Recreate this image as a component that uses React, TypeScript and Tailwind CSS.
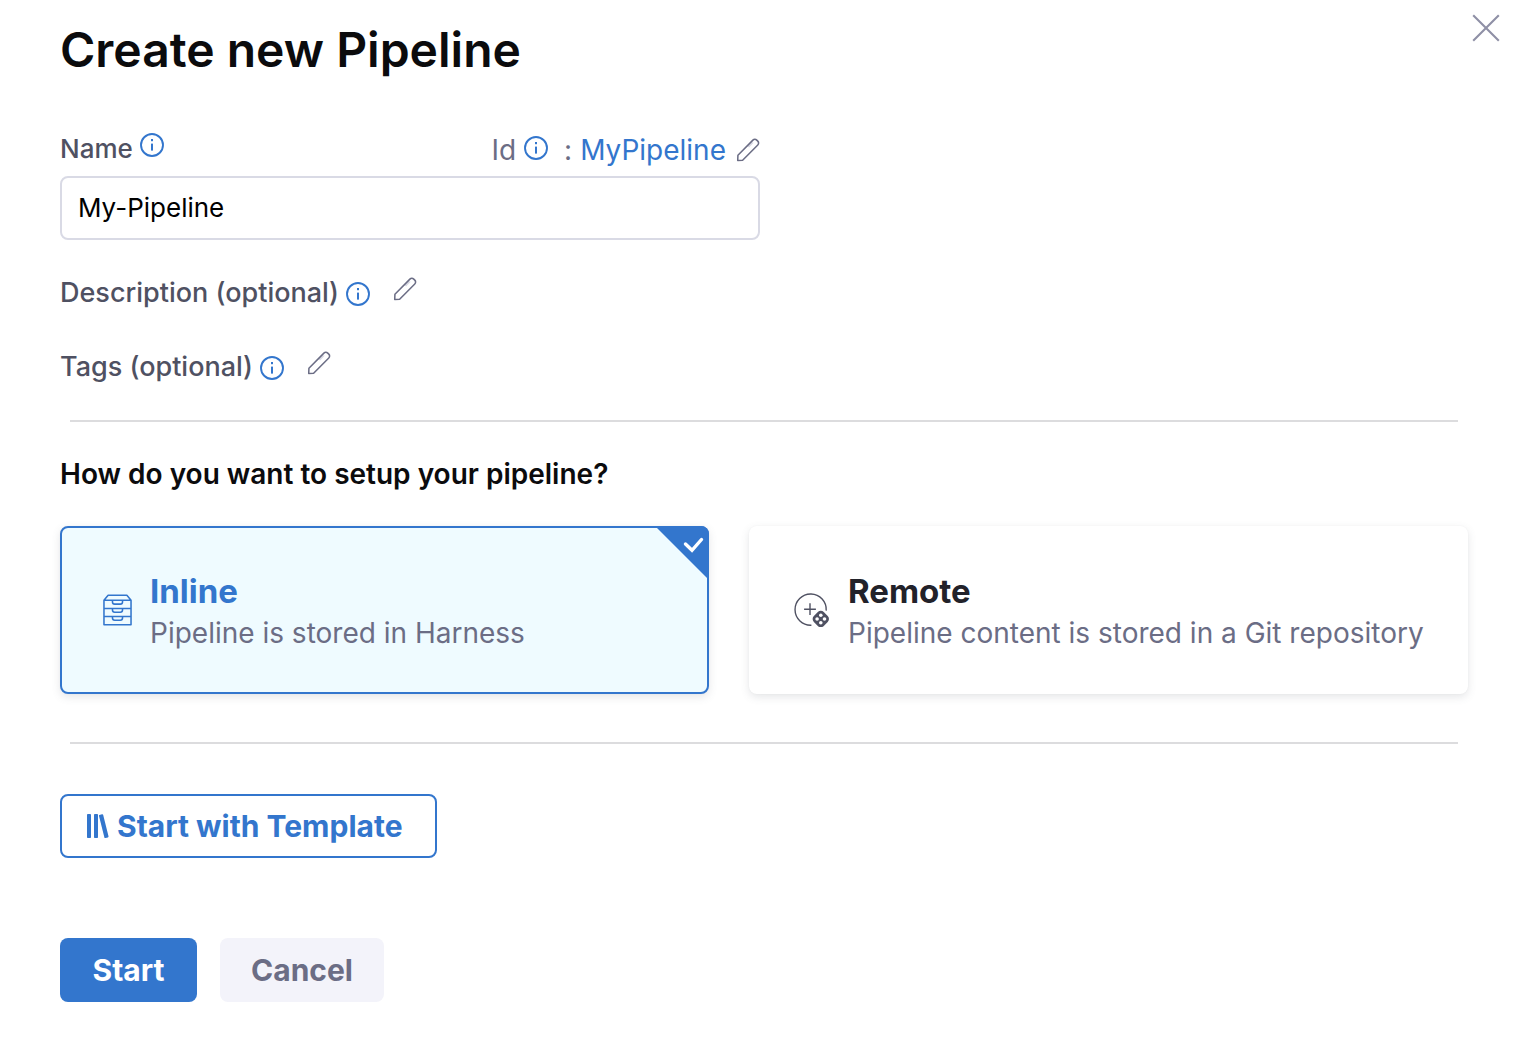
import { useState } from "react";
import type { ReactNode } from "react";

function InfoIcon() {
  return (
    <svg className="size-6 shrink-0 text-[#3376cd]" viewBox="0 0 24 24" fill="none" aria-hidden="true">
      <circle cx="12" cy="12" r="11" stroke="currentColor" strokeWidth="1.9" />
      <rect x="11" y="6" width="2" height="2.2" fill="currentColor" />
      <rect x="11" y="10.6" width="2" height="7" fill="currentColor" />
    </svg>
  );
}

function PencilIcon() {
  return (
    <svg className="size-6 text-[#6b6d85]" viewBox="0 0 25 25" fill="none" aria-hidden="true">
      <path d="M11.6 8.4l4.4-4.3 2.4.8-4.8 4.9z" fill="#d9dae5" />
      <path
        d="M1.8 23.4l.2-5.4L17.6 2.2a2.8 2.8 0 0 1 4 0l1.1 1.1a2.8 2.8 0 0 1 0 4L6.9 23.2z"
        stroke="currentColor"
        strokeWidth="1.6"
        strokeLinejoin="round"
      />
    </svg>
  );
}

function CloseIcon() {
  return (
    <svg className="size-7 text-[#8f90a6]" viewBox="0 0 28 28" fill="none" aria-hidden="true">
      <path d="M1.2 1.2l25.6 25.6M26.8 1.2L1.2 26.8" stroke="currentColor" strokeWidth="2.1" />
    </svg>
  );
}

function CabinetIcon() {
  return (
    <svg className="h-8 w-[29px] shrink-0 text-[#3376cd]" viewBox="0 0 30 32" fill="none" aria-hidden="true">
      <g stroke="currentColor" strokeWidth="1.6" strokeLinejoin="round">
        <path d="M1 6L5.3.8h19.4L29 6v25.2H1zM1 6h28M1 14.4h28M1 22.8h28" />
        <path d="M9.8 6.2v1.4c0 1.5.9 2.3 2.3 2.3h5.8c1.4 0 2.3-.8 2.3-2.3V6.2" />
        <path d="M9.8 14.6V16c0 1.5.9 2.3 2.3 2.3h5.8c1.4 0 2.3-.8 2.3-2.3v-1.4" />
        <path d="M9.8 23v1.2c0 1.5.9 2.3 2.3 2.3h5.8c1.4 0 2.3-.8 2.3-2.3V23" />
      </g>
    </svg>
  );
}

function RemoteIcon() {
  return (
    <svg className="h-[34px] w-9 shrink-0 text-[#4f5162]" viewBox="0 0 36 34" fill="none" aria-hidden="true">
      <path d="M32.2 17.6A15.6 15.6 0 1 0 17.4 32.2" stroke="currentColor" strokeWidth="1.4" />
      <path d="M16 10.3v11.8M10.1 16.2h11.8" stroke="currentColor" strokeWidth="1.4" />
      <rect x="19.8" y="19" width="14" height="14" rx="4.2" transform="rotate(45 26.8 26)" fill="currentColor" />
      <g fill="#fff">
        <circle cx="26.8" cy="22.3" r="1.8" />
        <circle cx="23.1" cy="26" r="1.8" />
        <circle cx="30.5" cy="26" r="1.8" />
        <circle cx="26.8" cy="29.7" r="1.8" />
      </g>
    </svg>
  );
}

function TemplateIcon() {
  return (
    <svg className="h-6 w-[23px] shrink-0" viewBox="0 0 23 24" aria-hidden="true" fill="currentColor">
      <rect x="1" y="0" width="4" height="24" rx="0.8" />
      <rect x="8" y="0" width="4" height="24" rx="0.8" />
      <path d="M13.4 1l2.6-.7c.6-.2 1 0 1.2.6L22.5 22.3c.1.6-.1 1-.6 1.1l-2.4.6c-.6.1-1-.1-1.1-.6L13 2c-.1-.5 0-.8.4-1z" />
    </svg>
  );
}

function CornerCheck() {
  return (
    <svg className="absolute -top-0.5 -right-0.5 size-[54px]" viewBox="0 0 54 54" fill="none" aria-hidden="true">
      <path d="M0 0h46a8 8 0 0 1 8 8v46z" fill="#3376cd" />
      <path d="M30.5 18l6.5 6.3L46.5 13.5" stroke="#fff" strokeWidth="3.4" strokeLinecap="round" />
    </svg>
  );
}

type CardProps = {
  value: string;
  title: string;
  text: string;
  icon: ReactNode;
  selected: boolean;
  onSelect: (value: string) => void;
};

function StoreCard({ value, title, text, icon, selected, onSelect }: CardProps) {
  return (
    <label
      className={
        "relative flex h-[168px] cursor-pointer items-center gap-[18px] rounded-lg border-2 shadow-[0_0_2px_rgba(40,41,61,0.04),0_3px_8px_rgba(96,97,112,0.16)] " +
        (selected ? "border-[#3376cd] bg-[#effbff] pl-[41px]" : "border-transparent bg-white pl-[43px]")
      }
    >
      <input
        type="radio"
        name="store"
        value={value}
        checked={selected}
        onChange={() => onSelect(value)}
        className="sr-only"
      />
      {icon}
      <span className="flex flex-col pt-1">
        <span
          className={
            "text-[33px] leading-[42px] font-bold " + (selected ? "text-[#3376cd]" : "text-[#22222a]")
          }
        >
          {title}
        </span>
        <span className="text-[28px] leading-[42px] text-[#6b6d85]">{text}</span>
      </span>
      {selected && <CornerCheck />}
    </label>
  );
}

function OptionalRow({ label }: { label: string }) {
  return (
    <div className="flex h-9 items-center">
      <span className="text-[27px] font-medium text-[#4f5162]">{label}</span>
      <span className="ml-[7px] pt-0.5">
        <InfoIcon />
      </span>
      <button type="button" aria-label={"Edit " + label} className="mb-2 ml-[23px]">
        <PencilIcon />
      </button>
    </div>
  );
}

export default function App() {
  const [name, setName] = useState("My-Pipeline");
  const [store, setStore] = useState("inline");

  return (
    <div className="min-h-screen bg-white font-['Inter',sans-serif]">
      <form className="relative pt-[22px] pr-[50px] pb-11 pl-[60px]" onSubmit={(e) => e.preventDefault()}>
        <button type="button" aria-label="Close" className="absolute top-3.5 right-[18px]">
          <CloseIcon />
        </button>
        <h1 className="text-[48px] leading-14 font-semibold text-[#0b0b0d]">Create new Pipeline</h1>

        <div className="mt-[52px] max-w-[700px]">
          <div className="flex h-10 items-center justify-between">
            <div className="flex items-center gap-[7px] pb-0.5">
              <label htmlFor="name" className="pb-0.5 text-[26px] font-medium text-[#4f5162]">
                Name
              </label>
              <span className="mb-2">
                <InfoIcon />
              </span>
            </div>
            <div className="flex items-center text-[28px] text-[#6b6d85]">
              <span>Id</span>
              <span className="mb-1 ml-2">
                <InfoIcon />
              </span>
              <span className="ml-4">:</span>
              <span className="ml-2 text-[#3376cd]">MyPipeline</span>
              <button type="button" aria-label="Edit Id" className="ml-2.5">
                <PencilIcon />
              </button>
            </div>
          </div>
          <input
            id="name"
            type="text"
            value={name}
            onChange={(e) => setName(e.target.value)}
            className="mt-1.5 block h-16 w-full rounded-lg border-2 border-[#d9dae5] bg-white px-4 pb-0.5 text-[26px] text-black outline-none"
          />
        </div>

        <div className="mt-[35px] flex flex-col gap-[38px]">
          <OptionalRow label="Description (optional)" />
          <OptionalRow label="Tags (optional)" />
        </div>

        <hr className="mx-2.5 mt-[35px] border-t-2 border-[#dcdcde]" />

        <h2 className="mt-[34px] text-[28px] leading-9 font-semibold text-[#0b0b0d]">
          How do you want to setup your pipeline?
        </h2>
        <div className="mt-[34px] grid grid-cols-[649fr_719fr] gap-10">
          <StoreCard
            value="inline"
            title="Inline"
            text="Pipeline is stored in Harness"
            icon={<CabinetIcon />}
            selected={store === "inline"}
            onSelect={setStore}
          />
          <StoreCard
            value="remote"
            title="Remote"
            text="Pipeline content is stored in a Git repository"
            icon={<RemoteIcon />}
            selected={store === "remote"}
            onSelect={setStore}
          />
        </div>

        <hr className="mx-2.5 mt-12 border-t-2 border-[#dcdcde]" />

        <button
          type="button"
          className="mt-[50px] flex h-16 w-[377px] items-center gap-2 rounded-lg border-2 border-[#3376cd] bg-white pl-6 text-[30px] font-bold text-[#3376cd]"
        >
          <TemplateIcon />
          Start with Template
        </button>

        <div className="mt-20 flex gap-[23px]">
          <button type="submit" className="h-16 w-[137px] rounded-lg bg-[#3376cd] text-[30px] font-bold text-white">
            Start
          </button>
          <button type="button" className="h-16 w-[164px] rounded-lg bg-[#f3f3fa] text-[30px] font-bold text-[#6b6d85]">
            Cancel
          </button>
        </div>
      </form>
    </div>
  );
}
